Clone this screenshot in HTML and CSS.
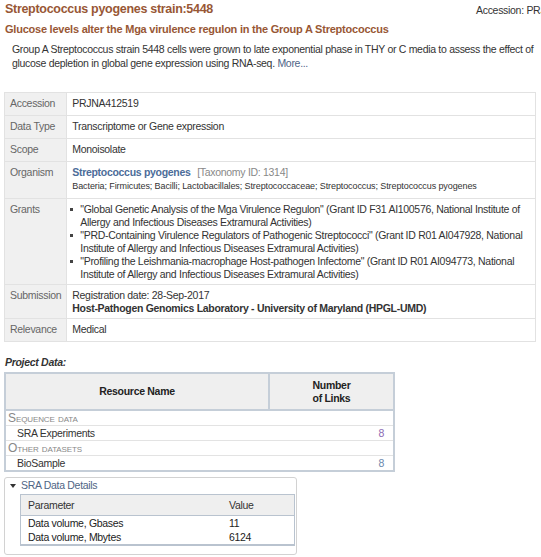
FILE: index.html
```html
<!DOCTYPE html>
<html>
<head>
<meta charset="utf-8">
<link rel="stylesheet" href="styles.css">
</head>
<body>
<div class="page">
  <div class="header">
    <h1 class="title">Streptococcus pyogenes strain:5448</h1>
    <div class="acc">Accession: PRJNA412519</div>
  </div>
  <h2 class="subtitle">Glucose levels alter the Mga virulence regulon in the Group A Streptococcus</h2>
  <p class="desc">Group A Streptococcus strain 5448 cells were grown to late exponential phase in THY or C media to assess the effect of glucose depletion in global gene expression using RNA-seq. <a class="more">More...</a></p>

  <table class="info">
    <tr><th>Accession</th><td>PRJNA412519</td></tr>
    <tr><th>Data Type</th><td>Transcriptome or Gene expression</td></tr>
    <tr><th>Scope</th><td>Monoisolate</td></tr>
    <tr><th>Organism</th><td><a class="org">Streptococcus pyogenes</a> <span class="taxid">[Taxonomy ID: 1314]</span><div class="lineage">Bacteria; Firmicutes; Bacilli; Lactobacillales; Streptococcaceae; Streptococcus; Streptococcus pyogenes</div></td></tr>
    <tr><th>Grants</th><td class="tight">
      <ul class="grants">
        <li>"Global Genetic Analysis of the Mga Virulence Regulon" (Grant ID F31 AI100576, National Institute of Allergy and Infectious Diseases Extramural Activities)</li>
        <li>"PRD-Containing Virulence Regulators of Pathogenic Streptococci" (Grant ID R01 AI047928, National Institute of Allergy and Infectious Diseases Extramural Activities)</li>
        <li>"Profiling the Leishmania-macrophage Host-pathogen Infectome" (Grant ID R01 AI094773, National Institute of Allergy and Infectious Diseases Extramural Activities)</li>
      </ul>
    </td></tr>
    <tr><th>Submission</th><td class="tight">Registration date: 28-Sep-2017<br><b>Host-Pathogen Genomics Laboratory - University of Maryland (HPGL-UMD)</b></td></tr>
    <tr><th>Relevance</th><td>Medical</td></tr>
  </table>

  <div class="pd-title">Project Data:</div>
  <table class="pdata">
    <thead>
      <tr><th class="c-name">Resource Name</th><th class="c-num">Number<br>of Links</th></tr>
    </thead>
    <tbody>
      <tr class="cat"><td colspan="2">Sequence data</td></tr>
      <tr><td class="res">SRA Experiments</td><td class="num"><a class="visited">8</a></td></tr>
      <tr class="cat"><td colspan="2">Other datasets</td></tr>
      <tr><td class="res">BioSample</td><td class="num"><a class="link">8</a></td></tr>
    </tbody>
  </table>

  <div class="sra">
    <div class="sra-toggle"><span class="tri"></span>SRA Data Details</div>
    <table class="sra-table">
      <thead><tr><th class="p">Parameter</th><th>Value</th></tr></thead>
      <tbody>
        <tr><td>Data volume, Gbases</td><td>11</td></tr>
        <tr><td>Data volume, Mbytes</td><td>6124</td></tr>
      </tbody>
    </table>
  </div>
</div>
</body>
</html>
```

FILE: styles.css
```css
html, body {
  margin: 0;
  padding: 0;
  background: #fff;
  overflow: hidden;
}
body {
  font-family: "Liberation Sans", Arial, sans-serif;
  font-size: 10.5px;
  letter-spacing: -0.3px;
  color: #333;
}
.page {
  padding: 2px 5px 0 5px;
}
.header {
  display: grid;
  grid-template-columns: 471px auto;
  width: 536px;
  overflow: hidden;
  white-space: nowrap;
  align-items: center;
}
.title {
  margin: 0;
  font-size: 12.5px;
  font-weight: bold;
  color: #985735;
  line-height: 15px;
}
.acc {
  font-size: 10.5px;
  color: #333;
}
.subtitle {
  margin: 5px 0 0 0;
  font-size: 11px;
  letter-spacing: -0.23px;
  font-weight: bold;
  color: #985735;
  line-height: 14px;
}
.desc {
  margin: 6px 0 0 7px;
  line-height: 14px;
  color: #333;
}
.more {
  color: #4e6487;
}
.info {
  margin-top: 22px;
  margin-left: -1px;
  width: 532px;
  border-collapse: collapse;
  border: 1px solid #e2e2e2;
}
.info th, .info td {
  border-top: 1px solid #e2e2e2;
  vertical-align: top;
  padding: 4px 5px 5px 5px;
  line-height: 13px;
  text-align: left;
}
.info td.tight {
  padding-bottom: 3px;
}
.info th {
  width: 51px;
  background: #f0f0f0;
  font-weight: normal;
  color: #666;
  white-space: nowrap;
  border-right: 1px solid #e2e2e2;
}
.info td {
  color: #333;
}
.org {
  color: #4c6c99;
  font-weight: bold;
}
.taxid {
  color: #888;
  margin-left: 4px;
}
.lineage {
  font-size: 9px;
  letter-spacing: -0.1px;
  line-height: 14px;
}
.grants {
  margin: 0;
  padding: 0;
  list-style: none;
}
.grants li {
  display: flex;
}
.grants li::before {
  content: "";
  flex-shrink: 0;
  width: 3px;
  height: 3px;
  background: #444;
  margin: 5px 7px 0 -2px;
}
.pd-title {
  margin-top: 14px;
  font-weight: bold;
  font-style: italic;
  color: #333;
  line-height: 13px;
}
.pdata {
  margin-top: 3px;
  margin-left: -1px;
  width: 391px;
  border-collapse: collapse;
  border: 2px solid #c5ced8;
}
.pdata thead th {
  background: #efefef;
  font-weight: bold;
  color: #222;
  text-align: center;
  height: 35px;
  padding: 0;
  line-height: 13px;
  border-bottom: 2px solid #c5ced8;
}
.c-name {
  border-right: 2px solid #c5ced8;
}
.c-num {
  width: 123px;
}
.pdata td {
  border-top: 1px solid #e3e3e3;
  padding: 0 4px;
  height: 14px;
  line-height: 14px;
}
.pdata tbody tr:first-child td {
  border-top: none;
}
.cat td {
  font-variant: small-caps;
  color: #888;
  font-size: 12px;
  letter-spacing: -0.1px;
  padding-left: 2px;
}
.res {
  padding-left: 11px !important;
}
.num {
  text-align: right;
  padding-right: 9px !important;
}
.visited {
  color: #8b68b3;
}
.link {
  color: #6a86ad;
}
.sra {
  margin-top: 5px;
  margin-left: -1px;
  width: 291px;
  border: 1px solid #d2d2d2;
  border-radius: 3px;
  padding: 1px 0 8px 0;
}
.sra-toggle {
  color: #4f6584;
  line-height: 13px;
  padding-left: 5px;
  display: flex;
  align-items: center;
}
.tri {
  width: 0;
  height: 0;
  border-left: 3px solid transparent;
  border-right: 3px solid transparent;
  border-top: 4px solid #333;
  margin-right: 5px;
}
.sra-table {
  margin: 2px 0 0 15px;
  width: 275px;
  border-collapse: collapse;
  border: 1px solid #b9c3cf;
  border-bottom-width: 2px;
}
.sra-table th {
  background: #efefef;
  font-weight: normal;
  text-align: left;
  color: #333;
  padding: 4px 7px;
  line-height: 12px;
  border-bottom: 1px solid #b9c3cf;
}
.sra-table th.p {
  width: 187px;
}
.sra-table td {
  padding: 0 7px;
  height: 14px;
  line-height: 14px;
  color: #222;
}
```
